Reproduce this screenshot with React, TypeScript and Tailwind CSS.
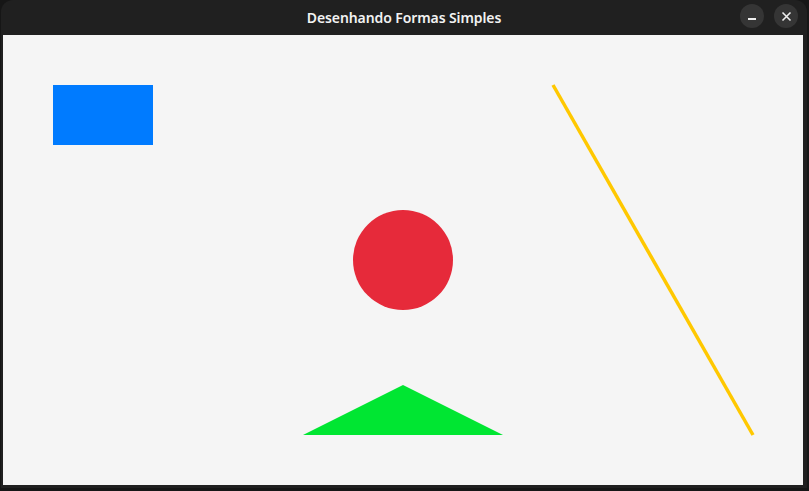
import React from "react";

export default function App() {
  return (
    <div className="w-[809px] h-[491px] bg-[#161616] overflow-hidden">
      <div className="ml-[1px] w-[806px] h-[488px] flex flex-col bg-[#202020] rounded-t-[12px]">
        <div className="h-[35px] relative flex items-center justify-center shrink-0">
          <span
            className="text-[14px] font-semibold text-[#f2f2f2] tracking-[-0.1px]"
            style={{ fontFamily: '"Noto Sans", "DejaVu Sans", sans-serif' }}
          >
            Desenhando Formas Simples
          </span>
          <div className="absolute right-[9px] top-[4px] flex gap-[10px]">
            <div className="w-[24px] h-[24px] rounded-full bg-[#353535] flex items-center justify-center">
              <div className="w-[8px] h-[2px] bg-[#eeeeee] mt-[5px]" />
            </div>
            <div className="w-[24px] h-[24px] rounded-full bg-[#353535] flex items-center justify-center">
              <svg width="11" height="11" viewBox="0 0 11 11">
                <path d="M1.5 1.5 L9.5 9.5 M9.5 1.5 L1.5 9.5" stroke="#eeeeee" strokeWidth="1.6" />
              </svg>
            </div>
          </div>
        </div>
        <div className="pl-[2px]">
          <svg width="800" height="450" viewBox="0 0 800 450" className="block bg-[#f5f5f5]">
            <rect x="50" y="50" width="100" height="60" fill="#007bff" />
            <circle cx="400" cy="225" r="50" fill="#e62a3a" />
            <polygon points="300,400 400,350 500,400" fill="#00e632" />
            <line x1="550" y1="50" x2="750" y2="400" stroke="#ffc800" strokeWidth="3.5" />
          </svg>
        </div>
      </div>
    </div>
  );
}
